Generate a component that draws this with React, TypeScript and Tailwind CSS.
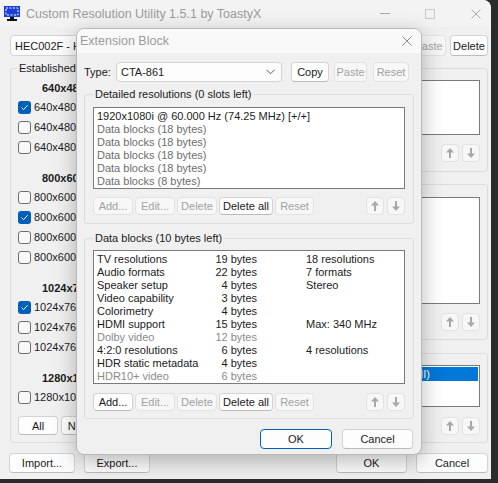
import React from "react";

type BtnProps = {
  children?: React.ReactNode;
  disabled?: boolean;
  primary?: boolean;
  className?: string;
};

function Btn({ children, disabled, primary, className = "" }: BtnProps) {
  const look = disabled
    ? "border-[#e2e2e2] bg-[#f7f7f7] text-[#a2a2a2]"
    : primary
    ? "border-[#005fb8] bg-[#fdfdfd] text-[#1b1b1b]"
    : "border-[#d3d3d3] border-b-[#bcbcbc] bg-[#fdfdfd] text-[#1b1b1b]";
  return (
    <div
      className={`flex shrink-0 items-center justify-center whitespace-nowrap rounded-[4px] border ${look} ${className}`}
    >
      {children}
    </div>
  );
}

function Arrow({ down }: { down?: boolean }) {
  return (
    <svg width="8" height="10" viewBox="0 0 8 10">
      <path
        d={down ? "M3 0h2v5.5h3L4 10 0 5.5h3z" : "M4 0l4 4.5H5V10H3V4.5H0z"}
        fill="#a8a8a8"
      />
    </svg>
  );
}

function UpDown() {
  return (
    <div className="flex gap-[3px]">
      <Btn disabled className="h-[18px] w-[18px]">
        <Arrow />
      </Btn>
      <Btn disabled className="h-[18px] w-[18px]">
        <Arrow down />
      </Btn>
    </div>
  );
}

function Check({ checked }: { checked?: boolean }) {
  return checked ? (
    <div className="flex h-[13px] w-[13px] shrink-0 items-center justify-center rounded-[3px] bg-[#005fb8]">
      <svg width="9" height="9" viewBox="0 0 9 9">
        <path d="M1.6 4.6l2 2L7.6 2.2" stroke="#ffffff" strokeWidth="1" fill="none" />
      </svg>
    </div>
  ) : (
    <div className="h-[13px] w-[13px] shrink-0 rounded-[3px] border border-[#6f6f6f] bg-[#f8f8f8]" />
  );
}

function Chevron() {
  return (
    <svg width="9" height="6" viewBox="0 0 9 6">
      <path d="M0.5 0.8l4 4 4-4" stroke="#5a5a5a" strokeWidth="1" fill="none" />
    </svg>
  );
}

function CloseX({ color }: { color: string }) {
  return (
    <svg width="10" height="10" viewBox="0 0 10 10">
      <path d="M0.5 0.5l9 9M9.5 0.5l-9 9" stroke={color} strokeWidth="1" />
    </svg>
  );
}

function ResRow({ label, checked }: { label: string; checked?: boolean }) {
  return (
    <div className="flex h-[20px] items-center gap-[3px] pl-[7px]">
      <Check checked={checked} />
      <span className="whitespace-nowrap">{label}</span>
    </div>
  );
}

function ResHead({ label, first }: { label: string; first?: boolean }) {
  return (
    <div
      className={`flex h-[19px] items-center pl-[31px] font-bold ${first ? "mt-[3px]" : "mt-[11px]"}`}
    >
      {label}
    </div>
  );
}

const detailed = [
  { t: "1920x1080i @ 60.000 Hz (74.25 MHz) [+/+]", g: false },
  { t: "Data blocks (18 bytes)", g: true },
  { t: "Data blocks (18 bytes)", g: true },
  { t: "Data blocks (18 bytes)", g: true },
  { t: "Data blocks (18 bytes)", g: true },
  { t: "Data blocks (8 bytes)", g: true },
];

const blocks = [
  { n: "TV resolutions", b: "19 bytes", i: "18 resolutions", g: false },
  { n: "Audio formats", b: "22 bytes", i: "7 formats", g: false },
  { n: "Speaker setup", b: "4 bytes", i: "Stereo", g: false },
  { n: "Video capability", b: "3 bytes", i: "", g: false },
  { n: "Colorimetry", b: "4 bytes", i: "", g: false },
  { n: "HDMI support", b: "15 bytes", i: "Max: 340 MHz", g: false },
  { n: "Dolby video", b: "12 bytes", i: "", g: true },
  { n: "4:2:0 resolutions", b: "6 bytes", i: "4 resolutions", g: false },
  { n: "HDR static metadata", b: "4 bytes", i: "", g: false },
  { n: "HDR10+ video", b: "6 bytes", i: "", g: true },
];

function ActionRow({ addEnabled }: { addEnabled?: boolean }) {
  return (
    <div className="flex h-[18px] items-center">
      <Btn disabled={!addEnabled} className="h-[18px] w-[40px]">
        Add...
      </Btn>
      <Btn disabled className="ml-[2px] h-[18px] w-[40px]">
        Edit...
      </Btn>
      <Btn disabled className="ml-[2px] h-[18px] w-[40px]">
        Delete
      </Btn>
      <Btn className="ml-[2px] h-[18px] w-[54px]">Delete all</Btn>
      <Btn disabled className="ml-[2px] h-[18px] w-[39px]">
        Reset
      </Btn>
      <div className="flex-1" />
      <UpDown />
    </div>
  );
}

export default function App() {
  return (
    <div className="relative h-[483px] w-[498px] overflow-hidden bg-[#2a2b2d] font-['Liberation_Sans',Arial,sans-serif] text-[11px] leading-[14px] text-[#1b1b1b]">
      {/* Main window */}
      <div className="flex h-[479px] w-[491px] flex-col overflow-hidden rounded-tr-[8px] bg-[#f0f0f0]">
        {/* title bar */}
        <div className="flex h-[27px] shrink-0 items-center bg-[#f3f3f3]">
          <div className="ml-[4px] flex w-[16px] flex-col items-center">
            <svg width="16" height="15" viewBox="0 0 16 15">
              <rect x="0" y="0" width="16" height="11" fill="#1a3fd8" />
              <rect
                x="2"
                y="2"
                width="12"
                height="7"
                fill="none"
                stroke="#ffffff"
                strokeWidth="1"
                strokeDasharray="2 1.5"
              />
              <rect x="6" y="11" width="4" height="2" fill="#111111" />
              <rect x="3" y="13" width="10" height="2" fill="#111111" />
            </svg>
          </div>
          <span className="ml-[6px] text-[12.5px] text-[#9b9b9b]">
            Custom Resolution Utility 1.5.1 by ToastyX
          </span>
          <div className="flex-1" />
          <div className="mr-[10px] flex items-center">
            <div className="h-[1px] w-[10px] bg-[#a8a8a8]" />
            <div className="ml-[35px] h-[10px] w-[10px] border border-[#c8c8c8]" />
            <div className="ml-[36px]">
              <CloseX color="#a8a8a8" />
            </div>
          </div>
        </div>

        {/* content */}
        <div className="flex flex-1 flex-col pl-[10px] pr-[3px] pt-[8px]">
          <div className="flex h-[21px] items-center">
            <div className="flex h-[21px] flex-1 items-center rounded-[4px] border border-[#d3d3d3] bg-[#fdfdfd] pl-[4px]">
              HEC002F - HDMI (active)
            </div>
            <Btn className="ml-[6px] h-[21px] w-[40px]">Edit...</Btn>
            <Btn className="ml-[4px] h-[21px] w-[38px]">Copy</Btn>
            <Btn disabled className="ml-[4px] h-[21px] w-[35px]">
              Paste
            </Btn>
            <Btn className="ml-[4px] h-[21px] w-[38px]">Delete</Btn>
          </div>

          <div className="mt-[5px] flex h-[382px]">
            {/* Established */}
            <fieldset className="flex w-[180px] flex-col rounded-[3px] border border-[#dcdcdc] px-0">
              <legend className="ml-[6px] px-[2px]">Established resolutions</legend>
              <ResHead label="640x480" first />
              <ResRow label="640x480 @ 60 Hz" checked />
              <ResRow label="640x480 @ 72 Hz" />
              <ResRow label="640x480 @ 75 Hz" />
              <ResHead label="800x600" />
              <ResRow label="800x600 @ 56 Hz" />
              <ResRow label="800x600 @ 60 Hz" checked />
              <ResRow label="800x600 @ 72 Hz" />
              <ResRow label="800x600 @ 75 Hz" />
              <ResHead label="1024x768" />
              <ResRow label="1024x768 @ 60 Hz" checked />
              <ResRow label="1024x768 @ 70 Hz" />
              <ResRow label="1024x768 @ 75 Hz" />
              <ResHead label="1280x1024" />
              <ResRow label="1280x1024 @ 75 Hz" />
              <div className="mt-[9px] flex gap-[3px] pl-[7px]">
                <Btn className="h-[19px] w-[40px]">All</Btn>
                <Btn className="h-[19px] w-[40px]">None</Btn>
              </div>
            </fieldset>

            {/* right column */}
            <div className="ml-[10px] flex flex-1 flex-col">
              <fieldset className="h-[111px] rounded-[3px] border border-[#dcdcdc] px-[7px]">
                <legend className="ml-[6px] px-[2px]">Detailed resolutions</legend>
                <div className="mt-[5px] h-[55px] border border-[#7a7a7a] bg-white" />
                <div className="mt-[9px] flex justify-end">
                  <UpDown />
                </div>
              </fieldset>
              <fieldset className="mt-[6px] h-[163px] rounded-[3px] border border-[#dcdcdc] px-[7px]">
                <legend className="ml-[6px] px-[2px]">Standard resolutions</legend>
                <div className="mt-[5px] h-[107px] border border-[#7a7a7a] bg-white" />
                <div className="mt-[9px] flex justify-end">
                  <UpDown />
                </div>
              </fieldset>
              <fieldset className="mt-[6px] h-[97px] rounded-[3px] border border-[#dcdcdc] px-[7px]">
                <legend className="ml-[6px] px-[2px]">Extension blocks</legend>
                <div className="mt-[5px] h-[42px] border border-[#7a7a7a] bg-white p-[1px]">
                  <div className="flex h-[14px] items-center justify-end bg-[#0078d7] pr-[48px] text-white">
                    CTA-861: 5 data blocks (HDMI)
                  </div>
                </div>
                <div className="mt-[10px] flex justify-end">
                  <UpDown />
                </div>
              </fieldset>
            </div>
          </div>

          <div className="mt-[10px] flex h-[20px] items-center">
            <Btn className="ml-[-1px] h-[20px] w-[66px]">Import...</Btn>
            <Btn className="ml-[9px] h-[20px] w-[66px]">Export...</Btn>
            <div className="flex-1" />
            <Btn className="h-[20px] w-[71px]">OK</Btn>
            <Btn className="ml-[9px] h-[20px] w-[72px]">Cancel</Btn>
          </div>
        </div>
      </div>

      {/* Extension Block dialog */}
      <div className="absolute left-[76px] top-[28px] flex h-[427px] w-[346px] flex-col overflow-hidden rounded-[8px] border border-[#b9b9b9] bg-[#f0f0f0] shadow-[0_6px_22px_rgba(0,0,0,0.28)]">
        <div className="flex h-[24px] shrink-0 items-center bg-[#f9f9f9]">
          <span className="ml-[3px] text-[12.5px] text-[#9b9b9b]">Extension Block</span>
          <div className="flex-1" />
          <div className="mr-[9px]">
            <CloseX color="#8a8a8a" />
          </div>
        </div>

        <div className="flex flex-col px-[7px] pt-[9px]">
          <div className="flex h-[20px] items-center">
            <span className="w-[32px]">Type:</span>
            <div className="flex h-[20px] w-[166px] items-center justify-between rounded-[4px] border border-[#d3d3d3] bg-[#fdfdfd] pl-[4px] pr-[6px]">
              <span>CTA-861</span>
              <Chevron />
            </div>
            <Btn className="ml-[9px] h-[20px] w-[38px]">Copy</Btn>
            <Btn disabled className="ml-[5px] h-[20px] w-[33px]">
              Paste
            </Btn>
            <Btn disabled className="ml-[6px] h-[20px] w-[36px]">
              Reset
            </Btn>
          </div>

          <fieldset className="mt-[5px] w-[330px] rounded-[3px] border border-[#dcdcdc] px-[8px] pb-[8px]">
            <legend className="px-[2px]">Detailed resolutions (0 slots left)</legend>
            <div className="mt-[6px] h-[82px] border border-[#7a7a7a] bg-white px-[3px] pt-[2px] leading-[13px]">
              {detailed.map((d, i) => (
                <div key={i} className={`whitespace-nowrap ${d.g ? "text-[#6d6d6d]" : ""}`}>
                  {d.t}
                </div>
              ))}
            </div>
            <div className="mt-[8px]">
              <ActionRow />
            </div>
          </fieldset>

          <fieldset className="mt-[7px] w-[330px] rounded-[3px] border border-[#dcdcdc] px-[8px] pb-[7px]">
            <legend className="px-[2px]">Data blocks (10 bytes left)</legend>
            <div className="mt-[5px] h-[134px] border border-[#7a7a7a] bg-white px-[3px] pt-[2px] leading-[13px]">
              <div className="grid grid-cols-[112px_48px_1fr]">
                {blocks.map((b, i) => (
                  <React.Fragment key={i}>
                    <div className={`whitespace-nowrap ${b.g ? "text-[#8a8a8a]" : ""}`}>{b.n}</div>
                    <div className={`whitespace-nowrap text-right ${b.g ? "text-[#8a8a8a]" : ""}`}>
                      {b.b}
                    </div>
                    <div className="whitespace-nowrap pl-[49px]">{b.i}</div>
                  </React.Fragment>
                ))}
              </div>
            </div>
            <div className="mt-[9px]">
              <ActionRow addEnabled />
            </div>
          </fieldset>

          <div className="mt-[10px] flex h-[20px] justify-end pr-[1px]">
            <Btn primary className="h-[20px] w-[72px]">
              OK
            </Btn>
            <Btn className="ml-[10px] h-[20px] w-[71px]">Cancel</Btn>
          </div>
        </div>
      </div>
    </div>
  );
}
